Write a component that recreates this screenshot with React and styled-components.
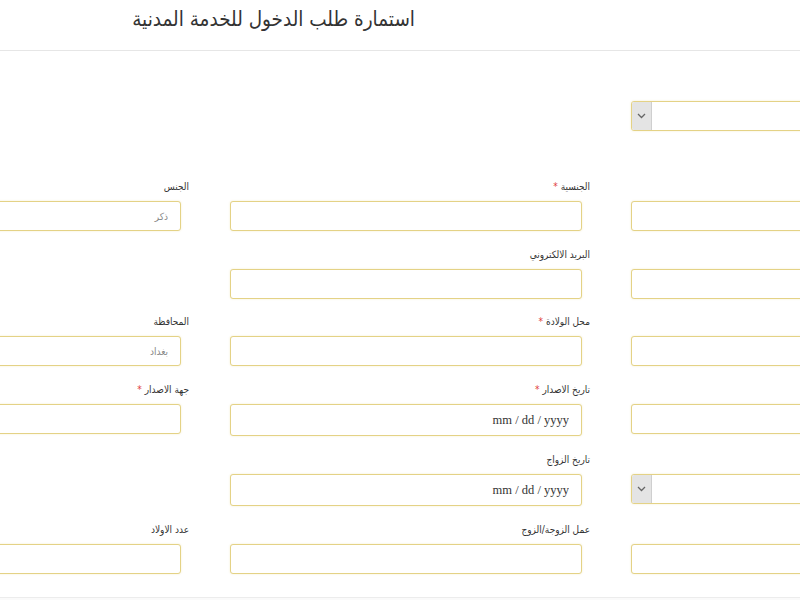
import React from "react"
import styled, { createGlobalStyle } from "styled-components"

const GlobalStyle = createGlobalStyle`
  html, body {
    margin: 0;
    padding: 0;
    background: #fff;
    overflow: hidden;
  }
  body {
    font-family: "DejaVu Sans Condensed", "DejaVu Sans", sans-serif;
    color: #333;
  }
`

const Page = styled.div`
  direction: rtl;
  width: 800px;
  height: 600px;
  overflow: hidden;
  position: relative;
`

const Header = styled.header`
  box-sizing: border-box;
  height: 51px;
  padding: 5px 385px 0 0;
  border-bottom: 1px solid #e6e6e6;
`

const Title = styled.h1`
  margin: 0;
  font-family: "DejaVu Sans Condensed", "DejaVu Sans", sans-serif;
  font-size: 20.5px;
  line-height: 28px;
  font-weight: normal;
  color: #333;
  white-space: nowrap;
`

// the form is wider than the window: its outer columns are cut by the edges
const Form = styled.form`
  width: 1162px;
  margin-right: -191px;
  padding-top: 28px;
`

const Row = styled.div`
  display: grid;
  grid-template-columns: repeat(3, 360px);
  column-gap: 41px;
  align-items: start;
  margin-bottom: ${(p) => p.$space ?? 16}px;
`

const Field = styled.div`
  display: flex;
  flex-direction: column;
  align-items: flex-start;
`

const Label = styled.label`
  display: block;
  height: 15px;
  margin-bottom: 7px;
  font-size: 10px;
  line-height: 15px;
  color: #333;
  white-space: nowrap;
`

const Star = styled.span`
  color: #e0403a;
  margin-right: 3px;
`

const Input = styled.input`
  box-sizing: border-box;
  width: 352px;
  height: ${(p) => (p.$date ? 32 : 30)}px;
  margin: 0 8px 0 0;
  padding: 0 12px;
  border: 1px solid #e4d286;
  border-radius: 3px;
  box-shadow: 0 0 2px rgba(228, 210, 134, 0.45);
  background: #fff;
  font-family: ${(p) =>
    p.$date
      ? `"Liberation Serif", "Times New Roman", serif`
      : `"DejaVu Sans Condensed", "DejaVu Sans", sans-serif`};
  font-size: ${(p) => (p.$date ? 12.5 : 10)}px;
  color: ${(p) => (p.$date ? "#333" : "#888")};
  text-align: right;
  outline: none;
`

const Select = styled.div`
  box-sizing: border-box;
  width: 352px;
  height: 30px;
  margin-right: 8px;
  display: flex;
  border: 1px solid #e4d286;
  border-radius: 3px;
  box-shadow: 0 0 2px rgba(228, 210, 134, 0.45);
  background: #fff;
  overflow: hidden;
`

const SelectValue = styled.div`
  flex: 1;
`

const Arrow = styled.div`
  width: 19px;
  display: flex;
  align-items: center;
  justify-content: center;
  background: #e4e4e4;
  border-right: 1px solid #cfcfcf;
`

const Footer = styled.div`
  margin-top: 23px;
  border-top: 1px solid #ececec;
  height: 6px;
  background: #fafafa;
`

const Chevron = () => (
  <svg width="9" height="6" viewBox="0 0 9 6">
    <path d="M1 1l3.5 3.5L8 1" fill="none" stroke="#666" strokeWidth="1.3" />
  </svg>
)

const TextField = ({ label, required, value, date }) => (
  <Field>
    <Label>
      {label}
      {required && <Star>*</Star>}
    </Label>
    <Input
      readOnly
      dir={date ? "ltr" : "rtl"}
      $date={date}
      value={date ? "mm / dd / yyyy" : value || ""}
    />
  </Field>
)

const SelectField = ({ label }) => (
  <Field>
    <Label>{label}</Label>
    <Select>
      <SelectValue />
      <Arrow>
        <Chevron />
      </Arrow>
    </Select>
  </Field>
)

const Empty = () => <div />

export default function App() {
  return (
    <Page>
      <GlobalStyle />
      <Header>
        <Title>استمارة طلب الدخول للخدمة المدنية</Title>
      </Header>
      <Form>
        <Row $space={48}>
          <SelectField />
          <Empty />
          <Empty />
        </Row>
        <Row>
          <TextField />
          <TextField label="الجنسية" required />
          <TextField label="الجنس" value="ذكر" />
        </Row>
        <Row $space={15}>
          <TextField />
          <TextField label="البريد الالكتروني" />
          <Empty />
        </Row>
        <Row>
          <TextField />
          <TextField label="محل الولادة" required />
          <TextField label="المحافظة" value="بغداد" />
        </Row>
        <Row>
          <TextField />
          <TextField label="تاريخ الاصدار" required date />
          <TextField label="جهة الاصدار" required />
        </Row>
        <Row>
          <SelectField />
          <TextField label="تاريخ الزواج" date />
          <Empty />
        </Row>
        <Row $space={0}>
          <TextField />
          <TextField label="عمل الزوجة/الزوج" />
          <TextField label="عدد الاولاد" />
        </Row>
      </Form>
      <Footer />
    </Page>
  )
}
